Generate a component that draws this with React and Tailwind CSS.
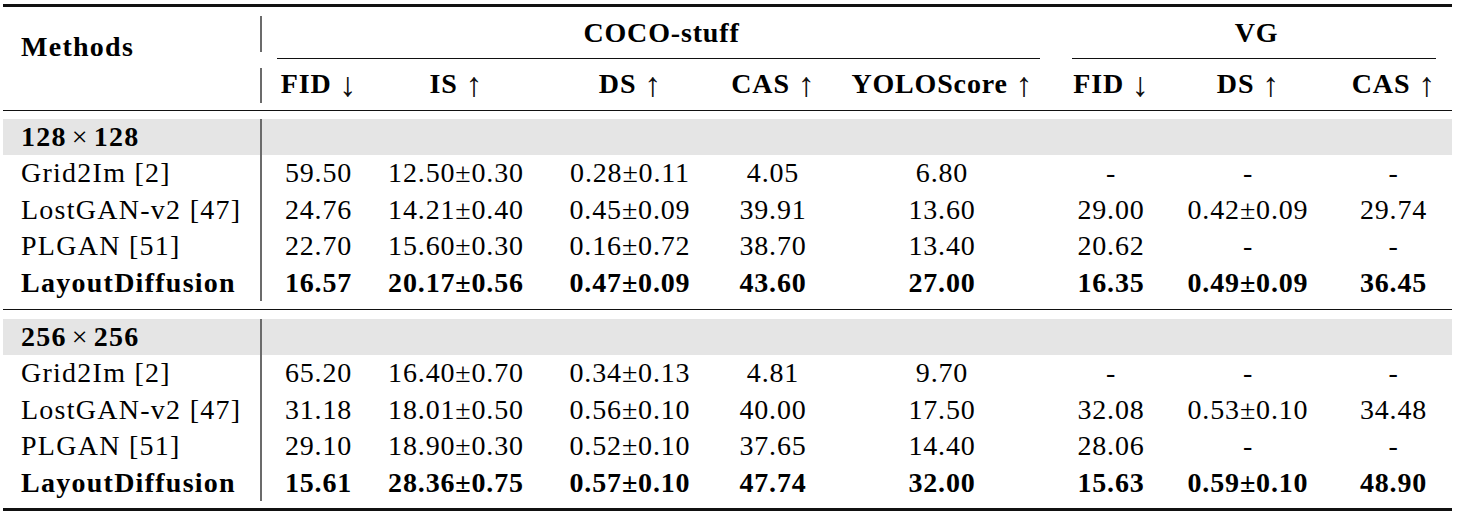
import React from "react";

const COLS =
  "grid grid-cols-[257px_2px_113px_162px_186px_100px_238px_100px_174px_117px] items-center";

const blocks = [
  {
    title: "128",
    rows: [
      ["Grid2Im [2]", "59.50", "12.50±0.30", "0.28±0.11", "4.05", "6.80", "-", "-", "-"],
      ["LostGAN-v2 [47]", "24.76", "14.21±0.40", "0.45±0.09", "39.91", "13.60", "29.00", "0.42±0.09", "29.74"],
      ["PLGAN [51]", "22.70", "15.60±0.30", "0.16±0.72", "38.70", "13.40", "20.62", "-", "-"],
      ["LayoutDiffusion", "16.57", "20.17±0.56", "0.47±0.09", "43.60", "27.00", "16.35", "0.49±0.09", "36.45"],
    ],
  },
  {
    title: "256",
    rows: [
      ["Grid2Im [2]", "65.20", "16.40±0.70", "0.34±0.13", "4.81", "9.70", "-", "-", "-"],
      ["LostGAN-v2 [47]", "31.18", "18.01±0.50", "0.56±0.10", "40.00", "17.50", "32.08", "0.53±0.10", "34.48"],
      ["PLGAN [51]", "29.10", "18.90±0.30", "0.52±0.10", "37.65", "14.40", "28.06", "-", "-"],
      ["LayoutDiffusion", "15.61", "28.36±0.75", "0.57±0.10", "47.74", "32.00", "15.63", "0.59±0.10", "48.90"],
    ],
  },
];

const headers = [
  ["FID", "↓"],
  ["IS", "↑"],
  ["DS", "↑"],
  ["CAS", "↑"],
  ["YOLOScore", "↑"],
  ["FID", "↓"],
  ["DS", "↑"],
  ["CAS", "↑"],
];

function Arrow({ c }) {
  return (
    <span className="font-normal text-[34px] leading-none align-[-3px] tracking-normal text-[#111] [text-shadow:0_0_0.5px_rgba(0,0,0,0.35)]">
      {c}
    </span>
  );
}

function Band({ n }) {
  return (
    <div className={`${COLS} h-[36px] bg-[#e5e5e5]`}>
      <div className="pl-[18px] font-bold leading-none tracking-[0.045em]">
        {n}
        <span className="font-normal px-[5px]">×</span>
        {n}
      </div>
      <div className="self-stretch bg-[#6b6b6b]" />
    </div>
  );
}

function Row({ cells, last }) {
  return (
    <div className={`${COLS} h-[36.5px] ${last ? "font-bold" : ""}`}>
      <div className="pl-[18px] leading-none whitespace-nowrap tracking-[0.045em]">{cells[0]}</div>
      <div className="self-stretch bg-[#6b6b6b]" />
      {cells.slice(1).map((c, i) => (
        <div key={i} className="text-center leading-none whitespace-nowrap">
          {c}
        </div>
      ))}
    </div>
  );
}

export default function App() {
  return (
    <div className="w-[1459px] h-[516px] bg-white text-black font-[family-name:'Liberation_Serif','Times_New_Roman',serif] text-[28px] tracking-[0.03em]">
      <div className="pt-[4px] pl-[3px] w-[1452px]">
        <div className="h-[3px] bg-[#111]" />
        {/* header */}
        <div className="flex h-[103px]">
          <div className="w-[257px] flex items-center pl-[18px] pb-[24px] font-bold tracking-[0.045em]">
            Methods
          </div>
          <div className="w-[2px] flex flex-col">
            <div className="h-[9px]" />
            <div className="h-[36px] bg-[#6b6b6b]" />
            <div className="h-[16px]" />
            <div className="h-[35px] bg-[#6b6b6b]" />
          </div>
          <div className="flex-1 flex flex-col">
            <div className="grid grid-cols-[799px_391px] h-[51px] items-center font-bold">
              <div className="text-center">COCO-stuff</div>
              <div className="text-center">VG</div>
            </div>
            <div className="grid grid-cols-[799px_391px] h-px">
              <div className="ml-[15px] mr-[21px] bg-[#111]" />
              <div className="ml-[11px] mr-[16px] bg-[#111]" />
            </div>
            <div className="grid grid-cols-[113px_162px_186px_100px_238px_100px_174px_117px] h-[51px] items-center font-bold">
              {headers.map(([t, a], i) => (
                <div key={i} className="text-center whitespace-nowrap leading-none">
                  {t} <Arrow c={a} />
                </div>
              ))}
            </div>
          </div>
        </div>
        <div className="h-px bg-[#111]" />
        {blocks.map((b, bi) => (
          <div key={bi}>
            <div className={bi === 0 ? "h-[8px]" : "h-[9px]"} />
            <Band n={b.title} />
            {b.rows.map((r, ri) => (
              <Row key={ri} cells={r} last={ri === 3} />
            ))}
            <div className={bi === 0 ? "h-[8px]" : "h-[7px]"} />
            {bi === 0 ? <div className="h-px bg-[#111]" /> : <div className="h-[3px] bg-[#111]" />}
          </div>
        ))}
      </div>
    </div>
  );
}
